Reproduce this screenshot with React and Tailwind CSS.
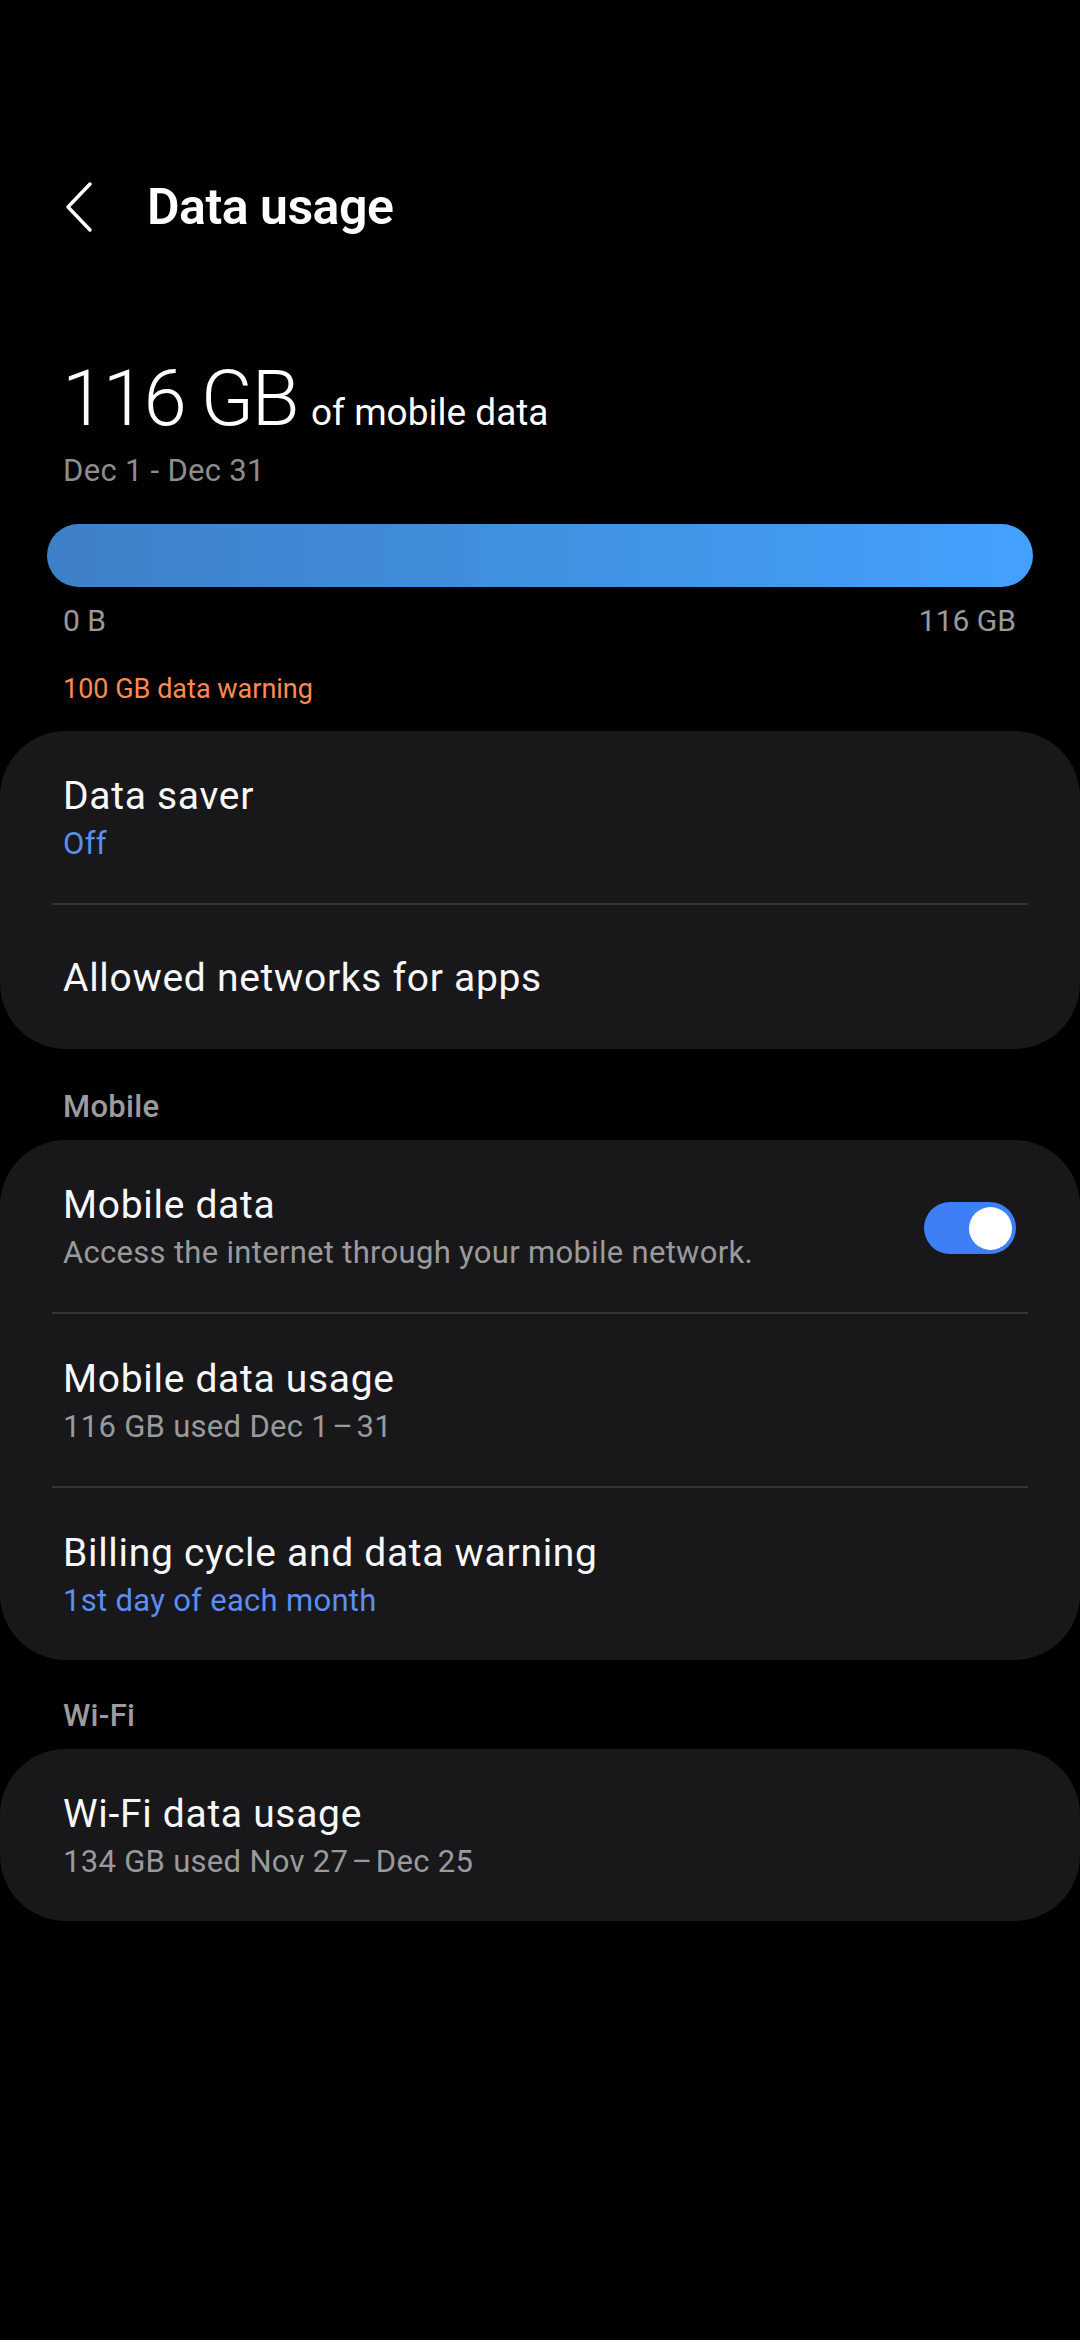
const font = { fontFamily: 'Roboto, "Noto Sans", sans-serif' }

const Divider = () => <div className="mx-[52px] h-[2px] bg-[#333336]" />

const Titulo = ({ children }) => (
  <p className="text-[39px] leading-[44px] text-[#f7f7f9] tracking-[0.7px]">{children}</p>
)

const Fila = ({ titulo, sub, subColor = 'text-[#9a9a9c]', toggle = false }) => {
  if (!sub) {
    return (
      <div className="px-[63px] pt-[51px] pb-[49px]">
        <Titulo>{titulo}</Titulo>
      </div>
    )
  }
  return (
    <div className="flex items-center justify-between pl-[63px] pr-[64px] pt-[43px] pb-[39px]">
      <div>
        <Titulo>{titulo}</Titulo>
        <p className={`mt-[6px] text-[31px] leading-[40px] tracking-[0.3px] ${subColor}`}>{sub}</p>
      </div>
      {toggle && (
        <div className="flex h-[52px] w-[92px] items-center justify-end rounded-full bg-[#3e7ef7] pr-[4px]">
          <div className="h-[43px] w-[43px] rounded-full bg-white" />
        </div>
      )}
    </div>
  )
}

const Tarjeta = ({ children, className = '' }) => (
  <div className={`rounded-[66px] bg-[#18181a] ${className}`}>{children}</div>
)

const Seccion = ({ texto, className = '' }) => (
  <p className={`px-[63px] text-[31px] leading-[40px] font-medium text-[#9c9c9e] tracking-[0.3px] ${className}`}>{texto}</p>
)

export default function App() {
  return (
    <div className="min-h-[2340px] w-[1080px] bg-black pt-[152px]" style={font}>
      <div className="flex h-[110px] items-center pl-[65px]">
        <svg width="28" height="52" viewBox="0 0 28 52" fill="none">
          <polyline
            points="25,3 3,26 25,49"
            stroke="white"
            strokeWidth="3.5"
            strokeLinecap="round"
            strokeLinejoin="round"
          />
        </svg>
        <h1 className="ml-[54px] text-[50px] font-semibold text-white tracking-[-0.5px]">Data usage</h1>
      </div>

      <div className="mt-[92px] flex items-baseline px-[62px]">
        <span className="text-[78px] leading-[90px] font-light text-white tracking-[-2.5px]">116 GB</span>
        <span className="ml-[14px] text-[37px] text-white">of mobile data</span>
      </div>
      <p className="mt-[7px] px-[63px] text-[31px] leading-[40px] text-[#8d8d8f] tracking-[0.3px]">Dec 1 - Dec 31</p>

      <div className="mx-[47px] mt-[33px] h-[63px] rounded-full bg-gradient-to-r from-[#3e80c6] to-[#43a1fd]" />

      <div className="mt-[14px] flex justify-between pl-[63px] pr-[64px] text-[30px] leading-[40px] text-[#9a9a9c]">
        <span>0 B</span>
        <span>116 GB</span>
      </div>
      <p className="mt-[28px] px-[63px] text-[27px] leading-[40px] text-[#ff8a4f]">100 GB data warning</p>

      <Tarjeta className="mt-[22px]">
        <Fila titulo="Data saver" sub="Off" subColor="text-[#5a8ef0]" />
        <Divider />
        <Fila titulo="Allowed networks for apps" />
      </Tarjeta>

      <Seccion texto="Mobile" className="mt-[38px]" />
      <Tarjeta className="mt-[13px]">
        <Fila titulo="Mobile data" sub="Access the internet through your mobile network." toggle />
        <Divider />
        <Fila titulo="Mobile data usage" sub={'116 GB used Dec 1\u200a\u2013\u200a31'} />
        <Divider />
        <Fila titulo="Billing cycle and data warning" sub="1st day of each month" subColor="text-[#5a8ef0]" />
      </Tarjeta>

      <Seccion texto="Wi-Fi" className="mt-[36px]" />
      <Tarjeta className="mt-[13px]">
        <Fila titulo="Wi-Fi data usage" sub={'134 GB used Nov 27\u200a\u2013\u200aDec 25'} />
      </Tarjeta>
    </div>
  )
}
